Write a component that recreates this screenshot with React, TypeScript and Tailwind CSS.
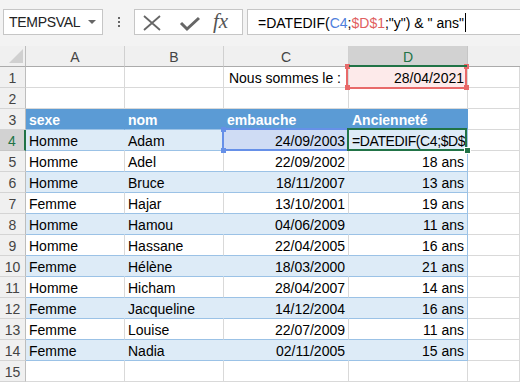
import React from "react";

type Row = { a: string; b: string; c: string; d: string };

const data: Row[] = [
  { a: "Homme", b: "Adam", c: "24/09/2003", d: "=DATEDIF(C4;$D$" },
  { a: "Homme", b: "Adel", c: "22/09/2002", d: "18 ans" },
  { a: "Homme", b: "Bruce", c: "18/11/2007", d: "13 ans" },
  { a: "Femme", b: "Hajar", c: "13/10/2001", d: "19 ans" },
  { a: "Homme", b: "Hamou", c: "04/06/2009", d: "11 ans" },
  { a: "Homme", b: "Hassane", c: "22/04/2005", d: "16 ans" },
  { a: "Femme", b: "Hélène", c: "18/03/2000", d: "21 ans" },
  { a: "Homme", b: "Hicham", c: "28/04/2007", d: "14 ans" },
  { a: "Femme", b: "Jacqueline", c: "14/12/2004", d: "16 ans" },
  { a: "Femme", b: "Louise", c: "22/07/2009", d: "11 ans" },
  { a: "Femme", b: "Nadia", c: "02/11/2005", d: "15 ans" },
];

const cellBase =
  "h-[21px] border-b border-r overflow-hidden whitespace-nowrap leading-[22px] px-[3px] text-[14px]";

function RowHeader({ n, selected }: { n: number; selected?: boolean }) {
  return selected ? (
    <div className="h-[21px] border-b border-b-[#c6c6c6] border-r-2 border-r-[#217346] bg-[#d2d2d2] text-center leading-[22px] text-[14px] text-[#217346]">
      {n}
    </div>
  ) : (
    <div className="h-[21px] border-b border-b-[#d4d4d4] border-r border-r-[#bdbdbd] bg-[#f0f0f0] text-center leading-[22px] text-[14px] text-[#444]">
      {n}
    </div>
  );
}

function EmptyCell() {
  return <div className={`${cellBase} bg-white border-b-[#d9d9d9] border-r-[#d9d9d9]`} />;
}

export default function App() {
  return (
    <div className="w-[520px] h-[382px] overflow-hidden bg-white font-['Liberation_Sans',Arial,sans-serif] text-black">
      {/* Formula bar */}
      <div className="h-[46px] bg-[#f3f3f3] flex items-start pt-[9px]">
        <div className="ml-[3px] w-[100px] h-[26px] bg-white border border-[#c6c6c6] flex items-center pl-[5px] pr-[6px] text-[14px] text-[#222]">
          <span className="flex-1 pt-[1px] tracking-[-0.3px]">TEMPSVAL</span>
          <svg width="8" height="4" viewBox="0 0 8 4">
            <path d="M0 0 L8 0 L4 4 Z" fill="#666" />
          </svg>
        </div>
        <div className="w-[31px] h-[26px] flex flex-col items-center justify-center gap-[2px]">
          <div className="w-[2px] h-[2px] bg-[#666]" />
          <div className="w-[2px] h-[2px] bg-[#666]" />
          <div className="w-[2px] h-[2px] bg-[#666]" />
        </div>
        <div className="w-[109px] h-[26px] bg-white border border-[#c6c6c6] flex items-center">
          <svg width="78" height="24" viewBox="0 0 78 24">
            <path d="M9 6 L25 20 M25 6 L9 20" stroke="#666" strokeWidth="1.8" fill="none" />
            <path d="M46 13 L52 19 L64 8" stroke="#666" strokeWidth="3" fill="none" />
          </svg>
          <span className="text-[21px] italic text-[#555] font-['Liberation_Serif',serif] leading-[24px] -mt-[2px]">
            fx
          </span>
        </div>
        <div className="ml-[4px] flex-1 h-[26px] bg-white border-y border-l border-[#c6c6c6] flex items-center pl-[10px] text-[14px] pt-[2px]">
          <span>=DATEDIF(</span>
          <span className="text-[#4f7fdc]">C4</span>
          <span>;</span>
          <span className="text-[#e06060]">$D$1</span>
          <span>;"y") &amp; " ans"</span>
          <span className="inline-block w-[1px] h-[19px] bg-black ml-[1px] -mt-[1px]" />
        </div>
      </div>

      {/* Grid */}
      <div className="relative grid grid-cols-[26px_99px_99px_125px_119px_1fr]">
        {/* column header row */}
        <div className="h-[21px] border-b border-r border-b-[#ababab] border-r-[#bdbdbd] bg-[#f0f0f0] relative">
          <svg className="absolute left-[9px] top-[3px]" width="14" height="14" viewBox="0 0 14 14">
            <path d="M14 0 L14 14 L0 14 Z" fill="#d0d0d0" />
          </svg>
        </div>
        {["A", "B", "C"].map((l) => (
          <div
            key={l}
            className="h-[21px] border-b border-r border-b-[#ababab] border-r-[#d0d0d0] bg-[#f0f0f0] text-center leading-[22px] text-[14px] text-[#444]"
          >
            {l}
          </div>
        ))}
        <div className="h-[21px] border-b-2 border-r border-b-[#217346] border-r-[#c6c6c6] bg-[#d2d2d2] text-center leading-[22px] text-[14px] text-[#217346]">
          D
        </div>
        <div className="h-[21px] border-b border-b-[#ababab] bg-[#f0f0f0]" />

        {/* row 1 */}
        <RowHeader n={1} />
        <EmptyCell />
        <EmptyCell />
        <div className={`${cellBase} bg-white border-b-[#d9d9d9] border-r-[#d9d9d9] text-right pr-[7px] overflow-visible`}>
          Nous sommes le :
        </div>
        <div className={`${cellBase} bg-[#fdeaea] border-b-[#d9d9d9] border-r-[#d9d9d9] text-right`}>28/04/2021</div>
        <EmptyCell />

        {/* row 2 */}
        <RowHeader n={2} />
        <EmptyCell />
        <EmptyCell />
        <EmptyCell />
        <EmptyCell />
        <EmptyCell />

        {/* row 3 table header */}
        <RowHeader n={3} />
        {["sexe", "nom", "embauche", "Ancienneté"].map((h) => (
          <div
            key={h}
            className={`${cellBase} bg-[#5b9bd5] border-b-[#9bc2e6] border-r-[#5b9bd5] text-white font-bold`}
          >
            {h}
          </div>
        ))}
        <EmptyCell />

        {/* data rows */}
        {data.map((r, i) => {
          const n = i + 4;
          const blue = n % 2 === 0;
          const bg = blue ? "bg-[#ddebf7]" : "bg-white";
          const innerR = blue ? "border-r-[#ddebf7]" : "border-r-[#d9d9d9]";
          return (
            <React.Fragment key={n}>
              <RowHeader n={n} selected={n === 4} />
              <div className={`${cellBase} ${bg} border-b-[#9bc2e6] ${innerR}`}>{r.a}</div>
              <div className={`${cellBase} ${bg} border-b-[#9bc2e6] ${innerR}`}>{r.b}</div>
              <div
                className={`${cellBase} ${n === 4 ? "bg-[#cfdcf4]" : bg} border-b-[#9bc2e6] ${innerR} text-right`}
              >
                {r.c}
              </div>
              <div
                className={`${cellBase} ${bg} border-b-[#9bc2e6] border-r-[#9bc2e6] ${n === 4 ? "text-left tracking-[-0.4px]" : "text-right"}`}
              >
                {r.d}
              </div>
              <EmptyCell />
            </React.Fragment>
          );
        })}

        {/* row 15 */}
        <RowHeader n={15} />
        <EmptyCell />
        <EmptyCell />
        <EmptyCell />
        <EmptyCell />
        <EmptyCell />

        {/* reference highlight C4 (blue) */}
        <div className="absolute left-[222px] top-[82px] w-[127px] h-[23px] border-2 border-[#6690e8] pointer-events-none" />
        <div className="absolute left-[221px] top-[81px] w-[5px] h-[5px] bg-[#6690e8]" />
        <div className="absolute left-[221px] top-[102px] w-[5px] h-[5px] bg-[#6690e8]" />

        {/* reference highlight D1 (red) */}
        <div className="absolute left-[346px] top-[19px] w-[121px] h-[24px] border-2 border-[#e86a6a] pointer-events-none" />
        <div className="absolute left-[345px] top-[18px] w-[5px] h-[5px] bg-[#e86a6a]" />
        <div className="absolute left-[464px] top-[18px] w-[5px] h-[5px] bg-[#e86a6a]" />
        <div className="absolute left-[345px] top-[39px] w-[5px] h-[5px] bg-[#e86a6a]" />
        <div className="absolute left-[464px] top-[39px] w-[5px] h-[5px] bg-[#e86a6a]" />
        {/* green line under D header over the red */}
        <div className="absolute left-[349px] top-[19px] w-[118px] h-[2px] bg-[#217346]" />

        {/* active cell D4 */}
        <div className="absolute left-[347px] top-[82px] w-[120px] h-[23px] border-2 border-[#217346] pointer-events-none" />
        <div className="absolute left-[464px] top-[101px] w-[7px] h-[7px] bg-[#217346] border border-white" />
      </div>
    </div>
  );
}
